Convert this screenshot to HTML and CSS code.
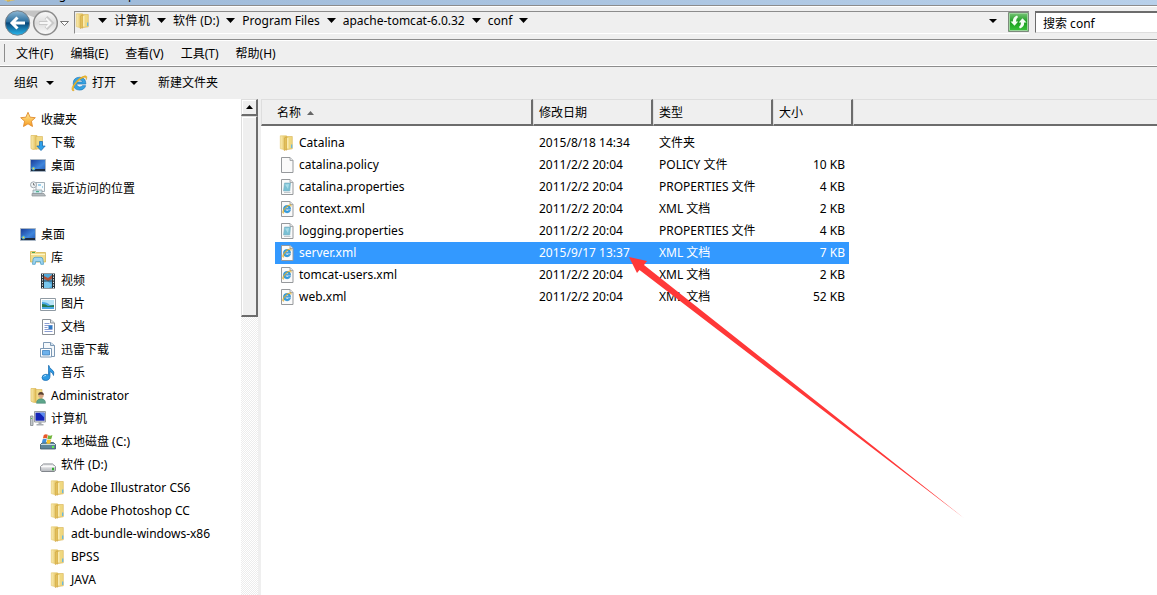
FILE: index.html
```html
<!DOCTYPE html>
<html lang="zh-CN">
<head>
<meta charset="utf-8">
<title>conf</title>
<link rel="stylesheet" href="styles.css">
</head>
<body>
<svg class="defs" aria-hidden="true">
  <defs>
    <linearGradient id="gold" x1="0" x2="1"><stop offset="0" stop-color="#fbeeb4"/><stop offset="1" stop-color="#dfb950"/></linearGradient>
    <linearGradient id="blue" x1="0" x2="1" y1="0" y2="1"><stop offset="0" stop-color="#173a96"/><stop offset=".6" stop-color="#3f86dc"/><stop offset="1" stop-color="#2458b4"/></linearGradient>
    <linearGradient id="orb" x1="0" x2="0" y1="0" y2="1"><stop offset="0" stop-color="#8fb8d4"/><stop offset=".45" stop-color="#2b6f9f"/><stop offset=".5" stop-color="#0a4678"/><stop offset="1" stop-color="#29b8ee"/></linearGradient>
    <linearGradient id="orb2" x1="0" x2="0" y1="0" y2="1"><stop offset="0" stop-color="#fafafa"/><stop offset=".5" stop-color="#dcdcdc"/><stop offset="1" stop-color="#fbfbfb"/></linearGradient>
    <linearGradient id="green" x1="0" x2="0" y1="0" y2="1"><stop offset="0" stop-color="#7cc67c"/><stop offset=".5" stop-color="#199c1f"/><stop offset="1" stop-color="#3cc83c"/></linearGradient>
    <linearGradient id="star" x1="0" x2="0" y1="0" y2="1"><stop offset="0" stop-color="#fff0a0"/><stop offset="1" stop-color="#f79a1c"/></linearGradient>
    <linearGradient id="drive" x1="0" x2="0" y1="0" y2="1"><stop offset="0" stop-color="#fafafa"/><stop offset="1" stop-color="#b5b8bd"/></linearGradient>
  </defs>
  <symbol id="i-folder" viewBox="0 0 16 16">
    <path d="M1.300.8h6.200v13.200l-2 .8-4.200-1.200z" fill="url(#gold)" stroke="#e3c566" stroke-width=".6"/>
    <path d="M7.500 1.500h5.800v12.300l-4.800.7-1 .8z" fill="#efd880" stroke="#d8b252" stroke-width=".6"/>
    <path d="M5.300 3l2.700-1.200v12.400l-2.700 1.400z" fill="#e2bf5c" stroke="#caa03c" stroke-width=".5"/>
    <path d="M8.800 3v10.500" stroke="#fff3c4" stroke-width="1.200"/><path d="M12.700 9.500v3.500" stroke="#5fb6e6" stroke-width="1.200"/>
  </symbol>
  <symbol id="i-star" viewBox="0 0 16 16"><path d="M8 .3l2.100 4.900 5.200.5-3.900 3.500 1.100 5.300L8 11.800 3.500 14.500l1.100-5.300L.7 5.700l5.200-.5z" fill="url(#star)" stroke="#e08a2c" stroke-width=".9"/></symbol>
  <symbol id="i-down" viewBox="0 0 16 16">
    <path d="M1 .5h6v13.500l-4 .5-2-1z" fill="url(#gold)" stroke="#dcba5a" stroke-width=".7"/><path d="M6 1.500h6.500V14H6z" fill="#f0d985" stroke="#d8b252" stroke-width=".6"/>
    <path d="M9.500 6.500h3V11h2.700L11 15.600 6.800 11h2.700z" fill="#2fa0ea" stroke="#1668b0" stroke-width=".7"/>
  </symbol>
  <symbol id="i-desktop" viewBox="0 0 16 16">
    <path d="M.5 1.500h15v12H.5z" fill="url(#blue)" stroke="#a9b6c4"/><path d="M1 11h14v2H1z" fill="#1d2a3c"/>
    <circle cx="3.500" cy="10.500" r="2" fill="#3aa0e0"/><circle cx="3.500" cy="10.500" r="1" fill="#f3d840"/>
  </symbol>
  <symbol id="i-recent" viewBox="0 0 16 16">
    <path d="M6 1.500h8.500v9H6z" fill="#f6fafc" stroke="#8d9aa3" stroke-width=".8"/><path d="M8 4h3M12 6h1" stroke="#4aa7d8"/><path d="M3 9h9v3.500H3z" fill="#cfe8ef" stroke="#8b969c" stroke-width=".7"/>
    <path d="M2 12.500h12l1.500 2.500H2z" fill="#b5bbbf" stroke="#8b9296" stroke-width=".7"/><path d="M6 10.700h3" stroke="#39a77c"/>
    <circle cx="3.500" cy="3.800" r="3" fill="#eef2f4" stroke="#9aa2a8" stroke-width=".9"/><path d="M3.500 2v2h1.500" fill="none" stroke="#555" stroke-width=".7"/>
  </symbol>
  <symbol id="i-library" viewBox="0 0 16 16">
    <path d="M.5 1.500h5l1 1h9v9.500H.5z" fill="#f0dc8c" stroke="#d4b453" stroke-width=".8"/><path d="M2 2.500h3" stroke="#4da653"/><path d="M1 4.500h14" stroke="#fff6ca"/>
    <path d="M2.500 14.300l.6-5q.3-2 2-2h5.800q1.700 0 2 2l.6 5h-2.700l-.4-2.700H5.600l-.4 2.700z" fill="#9fd4ef" stroke="#4d9fc8" stroke-width=".8"/>
  </symbol>
  <symbol id="i-video" viewBox="0 0 16 16">
    <path d="M1 .5h14v15H1z" fill="#263038"/><path d="M4 1h8v14H4z" fill="#52a8d8"/><path d="M4 3l4 2 4-3v4L8 8 4 6z" fill="#b0523a"/><path d="M4 9l3-1 5 4-3 3H4z" fill="#79c7ee"/><path d="M4 8h8" stroke="#263038" stroke-width=".8"/>
    <path d="M2.500 1v15M13.500 1v15" stroke="#e9eef0" stroke-dasharray="1.300 1.300"/>
  </symbol>
  <symbol id="i-picture" viewBox="0 0 16 16">
    <path d="M.5 2.500h15v12H.5z" fill="#fff" stroke="#8f9aa3"/><path d="M2 4h12v9H2z" fill="#4aa8e4"/><path d="M2 6q5 0 8 3h4v-5H2z" fill="#b9e3f7"/><path d="M2 8q4 0 6 2l6-1v2H2z" fill="#257a50"/>
  </symbol>
  <symbol id="i-doc" viewBox="0 0 16 16">
    <path d="M2.500.5h8l4 3.500v11.500h-12z" fill="#fff" stroke="#8b9197"/><path d="M10.500.5v3.500h4" fill="#dce3e8" stroke="#8b9197"/><path d="M4.500 4.500h5M4.500 6.500h8M4.500 8.500h3M4.500 10.500h8M4.500 12.500h8" stroke="#7d92cc" stroke-width=".9"/><path d="M8.500 6.500h4V10h-4z" fill="#2f79c4"/>
  </symbol>
  <symbol id="i-thunder" viewBox="0 0 16 16">
    <path d="M3.500.5h7l4 3v11h-11z" fill="#f4f8fb" stroke="#7d99b5"/><path d="M10.500.5v3h4" fill="#d0e0ee" stroke="#7d99b5"/><path d="M.5 6.500h11v8.500H.5z" fill="#fff" stroke="#7d99b5"/><path d="M2.500 8.500h7v4.500h-7z" fill="#6eb2ec" stroke="#3e83c2" stroke-width=".8"/>
  </symbol>
  <symbol id="i-music" viewBox="0 0 16 16"><path d="M9 .5q.3 3 2.800 4 3.200 2 1.700 6-.5-3-3.500-4v4.700q0 4-4.200 4.300-3.800 0-3.800-2.800 0-3 3.800-3.400 2 0 2.700.7V.5z" fill="#2f9be4" stroke="#1769ad" stroke-width=".7"/><path d="M3.500 11.500q1-1 2.500-1" stroke="#b9e6ff" fill="none"/></symbol>
  <symbol id="i-user" viewBox="0 0 16 16">
    <path d="M1 .5h5v14l-3-.3-2-1z" fill="url(#gold)" stroke="#dcba5a" stroke-width=".7"/><path d="M6 1.500h6V14H6z" fill="#f0d985" stroke="#d8b252" stroke-width=".6"/>
    <path d="M6.500 15.300q0-4.500 4.500-4.500t4.500 4.500z" fill="#5da58b" stroke="#3c7d67" stroke-width=".5"/><circle cx="11" cy="7.300" r="2.700" fill="#dba986"/><path d="M8.200 7q0-3 2.800-3t2.800 3q-3-1-5.600 0z" fill="#5b4332"/>
  </symbol>
  <symbol id="i-computer" viewBox="0 0 16 16">
    <path d="M.5 5h2.500v9.500H.5z" fill="#c4c8cb" stroke="#84898e" stroke-width=".8"/><path d="M1 7.500h1" stroke="#4c4"/><path d="M4.500.5h11v10.500h-11z" fill="#dde0e3" stroke="#989da2"/><path d="M5.500 1.700h9v8h-9z" fill="#1424b8"/><path d="M9.500 1.700h5v5z" fill="#5a8cf0"/><path d="M8.500 11h3v2h2v1.500h-7V13h2z" fill="#a9adb2"/>
  </symbol>
  <symbol id="i-sysdisk" viewBox="0 0 16 16">
    <path d="M.5 10.500l2-2h11l2 2v4.500H.5z" fill="#5d8598" stroke="#3b5665" stroke-width=".8"/><path d="M1 10.500h14" stroke="#c8dbe2"/><path d="M12 13h2" stroke="#63f04e" stroke-width="2"/>
    <path d="M3.800 1q2-1.300 4-.2l-.9 3.700q-1.900-1-4 0z" fill="#e8592b"/><path d="M8.200 1.200q2 1 4.200-.2l-1 3.700q-2 1.100-4.100 0z" fill="#72b63c"/><path d="M2.700 5.200q2-1.100 4 0l-.9 3.800q-1.900-1-4 0z" fill="#3f8fdb"/><path d="M7.200 5.500q2 .9 4.100-.1l-.9 3.800q-2 1-4.100 0z" fill="#f7c22e"/>
  </symbol>
  <symbol id="i-disk" viewBox="0 0 16 16"><path d="M.6 9.500l2.900-2.500h9l2.900 2.500v4l-1 1H1.600l-1-1z" fill="url(#drive)" stroke="#777c82" stroke-width=".9"/><path d="M1 9.700h14" stroke="#fff"/><path d="M12 12h2" stroke="#2fae2f" stroke-width="2.500"/></symbol>
  <symbol id="i-blank" viewBox="0 0 16 16"><path d="M2.500.5h8.500l3 3v12H2.500z" fill="#fafafa" stroke="#96999c"/><path d="M11 .5v3h3" fill="#e3e5e7" stroke="#96999c" stroke-width=".8"/></symbol>
  <symbol id="i-props" viewBox="0 0 16 16"><use href="#i-blank"/><path d="M5.500 4h6l-.7 8H4.500z" fill="#79c0d4" stroke="#7fb0c0" stroke-width=".6"/><path d="M6 5.500l4-.5-1 5z" fill="#a9dce8"/><path d="M5 13.500h6.500" stroke="#c1c8cc"/></symbol>
  <symbol id="i-ie" viewBox="0 0 16 16">
    <path d="M14 8.500H5.200q.3 2.800 3 2.800 1.700 0 2.500-1.300h3.100q-1.300 4.200-5.700 4.200-6-.2-6-6.200 0-5.700 6-5.900Q14 2.300 14 8.500zM5.300 6.600h5.600Q10.500 4.700 8.200 4.600 5.900 4.700 5.300 6.600z" fill="#36a3e2" stroke="#1873b8" stroke-width=".6"/>
    <path d="M1.800 15Q-.8 13 3.500 7.500 8.500 1.500 13 .8q3-.3 1.300 3.700.4-2.500-1.300-2.400Q9.500 2.500 5 7.500 1 12.500 3 14.500z" fill="#f4bd2b" stroke="#cf9414" stroke-width=".4"/>
  </symbol>
  <symbol id="i-xml" viewBox="0 0 16 16"><use href="#i-blank"/><use href="#i-ie" x="3" y="3" width="10" height="10"/></symbol>
  <symbol id="i-caret" viewBox="0 0 9 5"><path d="M0 0h9L4.500 5z"/></symbol>
  <symbol id="i-caret-s" viewBox="0 0 8 4"><path d="M0 0h8L4 4z"/></symbol>
</svg>

<div class="window">
  <header class="titlebar">
    <svg class="title-icon"><use href="#i-folder"/></svg>
    <span class="title-text">D:\Program Files\apache-tomcat-6.0.32\conf</span>
  </header>

  <div class="addressbar">
    <div class="history">
      <svg class="orbs" viewBox="0 0 66 28" role="img" aria-label="后退 前进">
        <path d="M12 1.500h34q-6 3-8 6t-10 0z" fill="#c4c4c4"/>
        <circle cx="13.500" cy="14" r="12.200" fill="url(#orb)" stroke="#777f86"/>
        <path d="M21 14H8M13.500 8.500L8 14l5.500 5.500" fill="none" stroke="#fff" stroke-width="3"/>
        <circle cx="41.500" cy="14" r="11.800" fill="url(#orb2)" stroke="#8a8a8a" stroke-width="1.500"/>
        <path d="M35 14h12M42 8.500l5.500 5.500-5.500 5.500" fill="none" stroke="#c8c8c8" stroke-width="4"/>
        <path d="M35.500 14h11M42 9.500l4.500 4.500-4.500 4.500" fill="none" stroke="#f6f6f6" stroke-width="2"/>
        <path d="M56.500 12.500h8l-4 4z" fill="#fff" stroke="#666" stroke-width=".9"/>
      </svg>
    </div>
    <nav class="crumbs" aria-label="地址">
      <svg class="icon"><use href="#i-folder"/></svg>
      <svg class="caret"><use href="#i-caret"/></svg>
      <button>计算机</button><svg class="caret"><use href="#i-caret"/></svg>
      <button>软件 (D:)</button><svg class="caret"><use href="#i-caret"/></svg>
      <button>Program Files</button><svg class="caret"><use href="#i-caret"/></svg>
      <button>apache-tomcat-6.0.32</button><svg class="caret"><use href="#i-caret"/></svg>
      <button>conf</button><svg class="caret"><use href="#i-caret"/></svg>
      <button class="history-drop" aria-label="以前的位置"><svg class="caret-s"><use href="#i-caret-s"/></svg></button>
      <button class="refresh" aria-label="刷新">
        <svg viewBox="0 0 21 20"><path d="M.5.500h20v19H.5z" fill="url(#green)" stroke="#7d8a7d"/><path d="M1.500 1.500h18v17h-18z" fill="none" stroke="#9bd69b"/><path d="M2.500 9.500h2.300q0-4.500 4.200-6l1 1.500Q8 6.500 8 9.500h2.300l-3.800 4.300zM18.500 10.500h-2.300q0 4.500-4.200 6l-1-1.500q2-1.500 2-4.500h-2.300l3.800-4.300z" fill="#f4fff4"/></svg>
      </button>
    </nav>
    <input class="search" type="text" value="搜索 conf" aria-label="搜索">
  </div>

  <nav class="menubar" aria-label="菜单">
    <button>文件(F)</button><button>编辑(E)</button><button>查看(V)</button><button>工具(T)</button><button>帮助(H)</button>
  </nav>

  <div class="toolbar">
    <button class="organize">组织<svg class="caret-s"><use href="#i-caret-s"/></svg></button>
    <button class="open"><svg class="icon"><use href="#i-ie"/></svg>打开</button>
    <button class="open-drop" aria-label="打开方式"><svg class="caret-s"><use href="#i-caret-s"/></svg></button>
    <button>新建文件夹</button>
  </div>

  <div class="content">
    <aside class="sidebar">
      <ul class="tree">
        <li><svg class="icon"><use href="#i-star"/></svg>收藏夹</li>
        <li class="d1"><svg class="icon"><use href="#i-down"/></svg>下载</li>
        <li class="d1"><svg class="icon"><use href="#i-desktop"/></svg>桌面</li>
        <li class="d1"><svg class="icon"><use href="#i-recent"/></svg>最近访问的位置</li>
      </ul>
      <ul class="tree">
        <li><svg class="icon"><use href="#i-desktop"/></svg>桌面</li>
        <li class="d1"><svg class="icon"><use href="#i-library"/></svg>库</li>
        <li class="d2"><svg class="icon"><use href="#i-video"/></svg>视频</li>
        <li class="d2"><svg class="icon"><use href="#i-picture"/></svg>图片</li>
        <li class="d2"><svg class="icon"><use href="#i-doc"/></svg>文档</li>
        <li class="d2"><svg class="icon"><use href="#i-thunder"/></svg>迅雷下载</li>
        <li class="d2"><svg class="icon"><use href="#i-music"/></svg>音乐</li>
        <li class="d1"><svg class="icon"><use href="#i-user"/></svg>Administrator</li>
        <li class="d1"><svg class="icon"><use href="#i-computer"/></svg>计算机</li>
        <li class="d2"><svg class="icon"><use href="#i-sysdisk"/></svg>本地磁盘 (C:)</li>
        <li class="d2"><svg class="icon"><use href="#i-disk"/></svg>软件 (D:)</li>
        <li class="d3"><svg class="icon"><use href="#i-folder"/></svg>Adobe Illustrator CS6</li>
        <li class="d3"><svg class="icon"><use href="#i-folder"/></svg>Adobe Photoshop CC</li>
        <li class="d3"><svg class="icon"><use href="#i-folder"/></svg>adt-bundle-windows-x86</li>
        <li class="d3"><svg class="icon"><use href="#i-folder"/></svg>BPSS</li>
        <li class="d3"><svg class="icon"><use href="#i-folder"/></svg>JAVA</li>
        <li class="d3"><svg class="icon"><use href="#i-folder"/></svg></li>
      </ul>
    </aside>
    <div class="scrollbar">
      <button class="scroll-up" aria-label="向上滚动"><svg class="up" viewBox="0 0 7 4"><path d="M0 4h7L3.500 0z"/></svg></button>
      <div class="thumb"></div>
    </div>

    <main class="files">
      <table>
        <colgroup><col class="c-name"><col class="c-date"><col class="c-type"><col class="c-size"><col></colgroup>
        <thead>
          <tr><th class="name">名称<svg class="sort" viewBox="0 0 7 4"><path d="M0 4h7L3.500 0z"/></svg></th><th>修改日期</th><th>类型</th><th>大小</th><th class="rest"></th></tr>
        </thead>
        <tbody>
          <tr><td class="name"><div><svg class="icon"><use href="#i-folder"/></svg>Catalina</div></td><td>2015/8/18 14:34</td><td>文件夹</td><td class="size"></td></tr>
          <tr><td class="name"><div><svg class="icon"><use href="#i-blank"/></svg>catalina.policy</div></td><td>2011/2/2 20:04</td><td>POLICY 文件</td><td class="size">10 KB</td></tr>
          <tr><td class="name"><div><svg class="icon"><use href="#i-props"/></svg>catalina.properties</div></td><td>2011/2/2 20:04</td><td>PROPERTIES 文件</td><td class="size">4 KB</td></tr>
          <tr><td class="name"><div><svg class="icon"><use href="#i-xml"/></svg>context.xml</div></td><td>2011/2/2 20:04</td><td>XML 文档</td><td class="size">2 KB</td></tr>
          <tr><td class="name"><div><svg class="icon"><use href="#i-props"/></svg>logging.properties</div></td><td>2011/2/2 20:04</td><td>PROPERTIES 文件</td><td class="size">4 KB</td></tr>
          <tr class="selected"><td class="name"><div><svg class="icon"><use href="#i-xml"/></svg>server.xml</div></td><td>2015/9/17 13:37</td><td>XML 文档</td><td class="size">7 KB</td></tr>
          <tr><td class="name"><div><svg class="icon"><use href="#i-xml"/></svg>tomcat-users.xml</div></td><td>2011/2/2 20:04</td><td>XML 文档</td><td class="size">2 KB</td></tr>
          <tr><td class="name"><div><svg class="icon"><use href="#i-xml"/></svg>web.xml</div></td><td>2011/2/2 20:04</td><td>XML 文档</td><td class="size">52 KB</td></tr>
        </tbody>
      </table>
      <svg class="pointer" viewBox="0 0 336 262" aria-hidden="true"><path d="M0 0l18 4-3 4L335.500 261.500 10.500 13l-2.500 3z" fill="#ff3838"/></svg>
    </main>
  </div>
</div>
</body>
</html>
```
FILE: styles.css
```css
* { box-sizing: border-box; }

body {
  margin: 0;
  background: #fff;
  color: #000;
  font: 12px/20px "Noto Sans", "Noto Sans CJK SC", sans-serif;
}

button {
  padding: 0;
  border: 0;
  background: none;
  color: inherit;
  font: inherit;
  white-space: nowrap;
}

svg { display: block; flex: none; }
.defs { position: absolute; width: 0; height: 0; }
.icon { width: 16px; height: 16px; }
.caret { width: 9px; height: 5px; }
.caret-s { width: 8px; height: 4px; }

.window {
  display: flex;
  flex-direction: column;
  height: 100vh;
  overflow: hidden;
  background: #efefef;
}

/* Bottom edge of the title bar */
.titlebar {
  display: flex;
  align-items: flex-end;
  gap: 6px;
  height: 5px;
  flex: none;
  padding-left: 3px;
  overflow: hidden;
  background: linear-gradient(to right, #9db9d8, #b8d0ea);
}
.title-icon { width: 14px; height: 14px; margin-bottom: 3px; }
.title-text { line-height: 20px; }

/* Address row */
.addressbar {
  display: flex;
  flex: none;
  height: 35px;
  padding: 5px 0 5px 4px;
  border-top: 1px solid #8c8c8c;
  border-bottom: 1px solid #8c8c8c;
  box-shadow: inset 0 1px #fff;
}
.history { width: 70px; }
.orbs { width: 66px; height: 28px; margin-top: -2px; }
.crumbs {
  display: flex;
  align-items: center;
  flex: 1;
  gap: 7px;
  height: 23px;
  padding-bottom: 4px;
  border: 1px solid #8c8c8c;
  border-right: 0;
  border-bottom-color: #fff;
}
.history-drop { display: flex; margin-left: auto; margin-right: 4px; }
.refresh { align-self: flex-start; }
.refresh svg { width: 21px; height: 20px; }
.search {
  width: 122px;
  height: 22px;
  margin-left: 6px;
  padding: 0 7px;
  border: solid #6c6c6c;
  border-width: 2px 0 1px 1px;
  border-bottom-color: #dedede;
  background: #fff;
  color: inherit;
  font: inherit;
}

.menubar {
  display: flex;
  align-items: center;
  flex: none;
  gap: 17px;
  height: 27px;
  padding-left: 16px;
  border-top: 1px solid #fff;
  border-bottom: 1px solid #8c8c8c;
  box-shadow: inset 0 -1px #fff;
  background: linear-gradient(#8c8c8c, #8c8c8c) 4px 3px / 1px 18px no-repeat;
}

.toolbar {
  display: flex;
  align-items: center;
  flex: none;
  height: 32px;
  padding-left: 14px;
}
.toolbar button { display: flex; align-items: center; }
.organize { gap: 8px; }
.toolbar .open { gap: 4px; margin-left: 17px; }
.open .icon { width: 17px; height: 17px; }
.toolbar .open-drop { margin: 0 20px 0 14px; }

.content { display: flex; flex: 1; min-height: 0; }

/* Folder tree */
.sidebar {
  flex: 0 0 241px;
  padding-top: 9px;
  overflow: hidden;
  background: #fff;
}
.tree { margin: 0 0 23px; padding: 0; list-style: none; }
.tree li {
  display: flex;
  align-items: center;
  gap: 5px;
  height: 23px;
  padding-left: 20px;
  white-space: nowrap;
}
.tree .d1 { padding-left: 30px; }
.tree .d2 { padding-left: 40px; }
.tree .d3 { padding-left: 50px; }

.scrollbar {
  display: flex;
  flex-direction: column;
  flex: 0 0 17px;
  background: repeating-conic-gradient(#ececec 0 25%, #fff 0 50%) 0 0 / 2px 2px;
}
.scroll-up, .thumb {
  border: 1px solid #dedede;
  border-right: 2px solid #6c6c6c;
  border-bottom: 2px solid #6c6c6c;
  background: #efefef;
  box-shadow: inset 1px 1px #fff;
}
.scroll-up {
  display: flex;
  align-items: center;
  justify-content: center;
  height: 17px;
}
.up { width: 7px; height: 4px; }
.thumb { height: 201px; }

/* File list */
.files {
  position: relative;
  flex: 1;
  min-width: 0;
  border-left: 3px solid #efefef;
  background: #fff;
}
table {
  width: 100%;
  table-layout: fixed;
  border-spacing: 0;
}
.c-name { width: 272px; }
.c-date, .c-type { width: 120px; }
.c-size { width: 80px; }
th {
  height: 27px;
  padding: 2px 5px 0;
  border: 1px solid #dedede;
  border-right: 2px solid #6c6c6c;
  border-bottom: 2px solid #6c6c6c;
  background: #efefef;
  font-weight: normal;
  text-align: left;
}
th.name { padding-left: 15px; }
th.rest { border-right: 0; }
.sort { display: inline-block; width: 7px; height: 4px; margin-left: 6px; fill: #666; vertical-align: 2px; }
tbody::before { content: ""; display: block; height: 6px; }
td {
  height: 22px;
  padding: 0 6px;
  white-space: nowrap;
}
td.name { padding: 0 0 0 14px; }
td.name div {
  display: flex;
  align-items: center;
  gap: 4px;
  height: 22px;
  padding-left: 4px;
}
td.size {
  padding-right: 4px;
  border-right: 4px solid #fff;
  text-align: right;
}
.selected { color: #fff; }
.selected td:not(.name), .selected .name div { background: #3399ff; }

/* Red annotation arrow lying over the list */
.pointer {
  position: absolute;
  left: 368px;
  top: 158px;
  width: 336px;
  height: 262px;
}
```
